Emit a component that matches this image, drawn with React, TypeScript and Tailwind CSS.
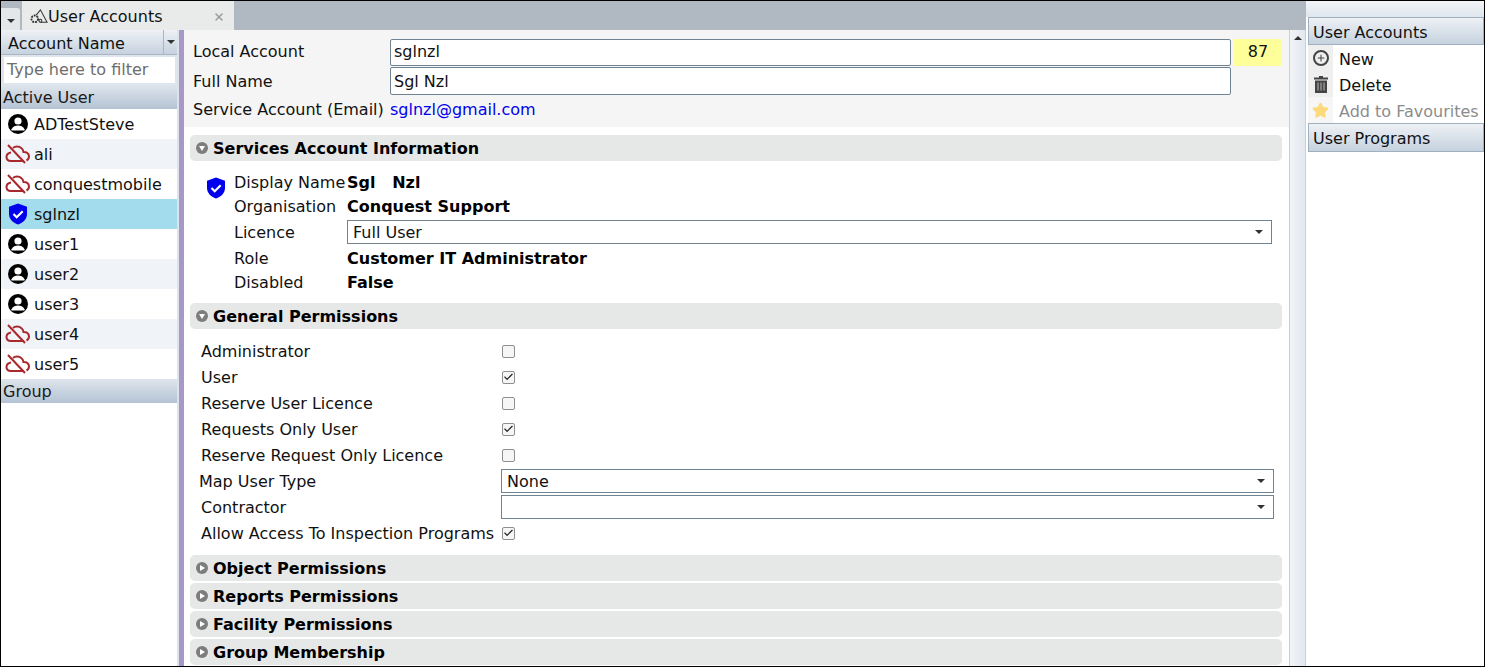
import { Star, Plus, Check, X } from "lucide-react";

const font = "font-['DejaVu_Sans',sans-serif]";

function UserIcon() {
  return (
    <svg width="22" height="22" viewBox="0 0 22 22" className="shrink-0">
      <circle cx="11" cy="11" r="10" fill="#000" />
      <circle cx="11" cy="8" r="3.6" fill="#fff" />
      <path d="M4.5 16.2c1.4-2.6 3.9-3.6 6.5-3.6s5.100 1 6.500 3.600v1.300H4.500z" fill="#fff" />
    </svg>
  );
}

function CloudOffIcon() {
  return (
    <svg width="26" height="22" viewBox="0 0 26 22" className="shrink-0" fill="none" stroke="#a9282c" strokeWidth="2">
      <path d="M6 9.500C2.800 10 1.500 12 1.500 14c0 2.500 2 4 4.500 4h13" />
      <path d="M8 5c2-1.800 6-2 8.500.2 1.200 1 1.800 2.300 2 3.800 3-.2 5.500 1.500 5.500 4.500 0 1.800-1 3.200-2.500 4" />
      <path d="M3 2l17 18" />
    </svg>
  );
}

function ShieldIcon({ size = 20 }: { size?: number }) {
  return (
    <svg width={size} height={size + 2} viewBox="0 0 20 22" className="shrink-0">
      <path d="M10 .5l9 3.200v7.300c0 5-3.800 8.700-9 10.500-5.200-1.800-9-5.500-9-10.500V3.700z" fill="#0000ee" />
      <path d="M5.500 11l3.200 3.200 6-6" fill="none" stroke="#fff" strokeWidth="2.200" />
    </svg>
  );
}

function TrashIcon() {
  return (
    <svg width="14" height="17" viewBox="0 0 14 17" className="shrink-0">
      <path d="M5 0h4v1.500h5V3.500H0V1.500h5z" fill="#444" />
      <path d="M1 4.500h12V17H1z" fill="#444" />
      <path d="M4 6.500v8M7 6.500v8M10 6.500v8" stroke="#bbb" strokeWidth="1" />
    </svg>
  );
}

function Arrow() {
  return <span className="h-0 w-0 border-x-[4px] border-t-[4px] border-x-transparent border-t-[#333]" />;
}

function SectionHeader({ title, open }: { title: string; open?: boolean }) {
  return (
    <div className="flex h-[26px] items-center rounded-[5px] bg-[#e6e7e7] pl-[6px]">
      <span className="flex h-[12px] w-[12px] items-center justify-center rounded-full bg-[#7d7d7d]">
        {open ? (
          <span className="h-0 w-0 border-x-[3px] border-t-[5px] border-x-transparent border-t-white" />
        ) : (
          <span className="h-0 w-0 border-y-[3px] border-l-[5px] border-y-transparent border-l-white" />
        )}
      </span>
      <span className="ml-[5px] pt-[2px] text-[16px] font-bold text-black">{title}</span>
    </div>
  );
}

function Select({ value, className }: { value: string; className: string }) {
  return (
    <div className={`flex h-[24px] items-center justify-between border border-[#6f8393] bg-white pl-[5px] pr-[8px] ${className}`}>
      <span className="pt-[2px]">{value}</span>
      <Arrow />
    </div>
  );
}

function CheckBox({ checked }: { checked?: boolean }) {
  return (
    <span className="mb-[2px] flex h-[13px] w-[13px] items-center justify-center rounded-[2px] border border-[#8f8f8f] bg-[#f6f6f6]">
      {checked && <Check size={12} strokeWidth={2.5} color="#222" />}
    </span>
  );
}

const users = [
  { name: "ADTestSteve", icon: "user" },
  { name: "ali", icon: "cloud" },
  { name: "conquestmobile", icon: "cloud" },
  { name: "sglnzl", icon: "shield" },
  { name: "user1", icon: "user" },
  { name: "user2", icon: "user" },
  { name: "user3", icon: "user" },
  { name: "user4", icon: "cloud" },
  { name: "user5", icon: "cloud" },
];

const permissions = [
  { label: "Administrator", checked: false },
  { label: "User", checked: true },
  { label: "Reserve User Licence", checked: false },
  { label: "Requests Only User", checked: true },
  { label: "Reserve Request Only Licence", checked: false },
];

const groupBar = "flex h-[24px] items-center bg-gradient-to-b from-[#dfe5ec] to-[#b4c3d4] pl-[2px] pt-[2px] text-[#1a1a1a]";
const panelBar = "flex items-center border border-[#9fb0c0] bg-gradient-to-b from-[#eef1f5] to-[#c6d2df] pl-[4px] pt-[3px]";

export default function App() {
  return (
    <div className={`flex h-[667px] w-[1485px] flex-col overflow-hidden border border-black bg-white text-[16px] leading-[20px] text-[#111] ${font}`}>
      <div className="flex min-h-0 flex-1">
        <div className="flex w-[1305px] flex-col">
          {/* tab strip */}
          <div className="flex h-[29px] items-end bg-[#b0b8c2]">
            <div className="flex h-[22px] w-[19px] items-center justify-center rounded-tr-[3px] bg-[#e4e7e9] pt-[3px]">
              <Arrow />
            </div>
            <div className="ml-[2px] flex h-[29px] w-[212px] items-center bg-[#e9ebeb] pl-[8px] pr-[9px] pt-[2px]">
              <svg width="18" height="17" viewBox="0 0 19 17" className="shrink-0" fill="none" stroke="#333" strokeWidth="1.100">
                <path d="M6.500 7L11 1.500 18 14.500H11" />
                <circle cx="5" cy="11" r="3.500" strokeWidth="2" strokeDasharray="2 1" />
                <circle cx="11" cy="13" r="1.500" />
              </svg>
              <span className="flex-1">User Accounts</span>
              <X size={12} strokeWidth={3} color="#9a9a9a" />
            </div>
          </div>
          <div className="flex min-h-0 flex-1">
            {/* left list */}
            <div className="flex w-[178px] shrink-0 flex-col border-r-2 border-[#dde3ea]">
              <div className="flex h-[25px] items-center border-b border-[#a9b5c2] bg-gradient-to-b from-[#eef1f5] to-[#c6d2df] pl-[7px]">
                <span className="flex-1 pt-[4px]">Account Name</span>
                <span className="flex h-full w-[14px] items-center justify-center border-l border-[#a9b5c2]">
                  <Arrow />
                </span>
              </div>
              <div className="flex h-[30px] items-center bg-[#dfe5ec] pl-[3px] pr-[2px]">
                <div className="flex h-[26px] w-full items-center bg-white pl-[3px] text-[#6e6e6e]">Type here to filter</div>
              </div>
              <div className={groupBar}>Active User</div>
              {users.map((u, i) => (
                <div
                  key={u.name}
                  className={`flex h-[30px] items-center ${
                    u.name === "sglnzl" ? "bg-[#a3dcec]" : i % 2 === 1 ? "bg-[#f0f4f8]" : "bg-white"
                  }`}
                >
                  <span className="flex w-[33px] justify-center">
                    {u.icon === "user" && <UserIcon />}
                    {u.icon === "cloud" && <CloudOffIcon />}
                    {u.icon === "shield" && <ShieldIcon />}
                  </span>
                  <span className="pt-[2px]">{u.name}</span>
                </div>
              ))}
              <div className={groupBar}>Group</div>
            </div>
            {/* splitter */}
            <div className="w-[5px] shrink-0 bg-[#a898c8]" />
            {/* main */}
            <div className="min-w-0 flex-1 overflow-hidden">
              <div className="h-[97px] bg-[#f5f5f5] pl-[9px] pr-[7px] pt-[8px]">
                <div className="flex h-[28px] items-center">
                  <span className="w-[197px]">Local Account</span>
                  <div className="flex h-[27px] w-[841px] items-center rounded-[2px] border border-[#6f8393] bg-white pl-[3px]">sglnzl</div>
                  <div className="ml-[3px] flex h-[27px] w-[48px] items-center justify-center bg-[#ffff99]">87</div>
                </div>
                <div className="mt-[1px] flex h-[28px] items-center">
                  <span className="w-[197px] pt-[2px]">Full Name</span>
                  <div className="flex h-[28px] w-[841px] items-center rounded-[2px] border border-[#6f8393] bg-white pl-[3px] pt-[2px]">Sgl Nzl</div>
                </div>
                <div className="mt-[1px] flex h-[28px] items-center">
                  <span className="w-[197px] whitespace-nowrap">Service Account (Email)</span>
                  <span className="text-[#0000ee]">sglnzl@gmail.com</span>
                </div>
              </div>
              <div className="pl-[6px] pr-[7px] pt-[8px]">
                <SectionHeader title="Services Account Information" open />
                <div className="flex h-[142px] pt-[10px]">
                  <div className="w-[44px] pl-[16px] pt-[6px]">
                    <ShieldIcon />
                  </div>
                  <div className="flex-1">
                    <div className="flex h-[24px] items-center">
                      <span className="w-[113px]">Display Name</span>
                      <b className="text-black">Sgl&nbsp;&nbsp;&nbsp;Nzl</b>
                    </div>
                    <div className="flex h-[24px] items-center">
                      <span className="w-[113px]">Organisation</span>
                      <b className="text-black">Conquest Support</b>
                    </div>
                    <div className="flex h-[28px] items-center">
                      <span className="w-[113px]">Licence</span>
                      <Select value="Full User" className="mb-[2px] w-[925px]" />
                    </div>
                    <div className="flex h-[24px] items-center">
                      <span className="w-[113px]">Role</span>
                      <b className="text-black">Customer IT Administrator</b>
                    </div>
                    <div className="flex h-[24px] items-center">
                      <span className="w-[113px]">Disabled</span>
                      <b className="text-black">False</b>
                    </div>
                  </div>
                </div>
                <SectionHeader title="General Permissions" open />
                <div className="h-[226px] pl-[11px] pt-[10px]">
                  {permissions.map((p) => (
                    <div key={p.label} className="flex h-[26px] items-center">
                      <span className="w-[301px]">{p.label}</span>
                      <CheckBox checked={p.checked} />
                    </div>
                  ))}
                  <div className="flex h-[26px] items-center">
                    <span className="ml-[-2px] w-[302px]">Map User Type</span>
                    <Select value="None" className="mb-[2px] w-[773px]" />
                  </div>
                  <div className="flex h-[26px] items-center">
                    <span className="w-[300px]">Contractor</span>
                    <Select value="" className="mb-[2px] w-[773px]" />
                  </div>
                  <div className="flex h-[26px] items-center">
                    <span className="w-[301px] whitespace-nowrap">Allow Access To Inspection Programs</span>
                    <CheckBox checked />
                  </div>
                </div>
                <div className="flex flex-col gap-[2px]">
                  <SectionHeader title="Object Permissions" />
                  <SectionHeader title="Reports Permissions" />
                  <SectionHeader title="Facility Permissions" />
                  <SectionHeader title="Group Membership" />
                </div>
              </div>
            </div>
            {/* scrollbar */}
            <div className="flex w-[17px] shrink-0 justify-center border-x border-[#c5d0dc] bg-gradient-to-r from-[#f2f4f7] to-[#e2e8f0] pt-[6px]">
              <span className="h-0 w-0 border-x-[4px] border-b-[4px] border-x-transparent border-b-[#333]" />
            </div>
          </div>
        </div>
        {/* right panel */}
        <div className="flex w-[178px] shrink-0 flex-col bg-white">
          <div className="h-[16px] bg-gradient-to-b from-[#f3f5f7] to-[#dfe6ee]" />
          <div className="ml-[2px] flex flex-col">
            <div className={`${panelBar} h-[28px]`}>User Accounts</div>
            <div className="flex h-[26px] items-center">
              <span className="flex h-full w-[25px] items-center justify-center bg-[#efefef]">
                <span className="flex h-[16px] w-[16px] items-center justify-center rounded-full border-2 border-[#444]">
                  <Plus size={10} strokeWidth={2.5} color="#444" />
                </span>
              </span>
              <span className="ml-[6px] pt-[4px]">New</span>
            </div>
            <div className="flex h-[26px] items-center">
              <span className="flex h-full w-[25px] items-center justify-center bg-[#efefef]">
                <TrashIcon />
              </span>
              <span className="ml-[6px] pt-[4px]">Delete</span>
            </div>
            <div className="flex h-[26px] items-center">
              <span className="flex h-full w-[25px] items-center justify-center bg-[#f6f6f6]">
                <Star size={17} color="#fcd97a" fill="#fcd97a" />
              </span>
              <span className="ml-[6px] whitespace-nowrap pt-[4px] text-[#8c8c8c]">Add to Favourites</span>
            </div>
            <div className={`${panelBar} h-[29px]`}>User Programs</div>
          </div>
        </div>
      </div>
    </div>
  );
}
